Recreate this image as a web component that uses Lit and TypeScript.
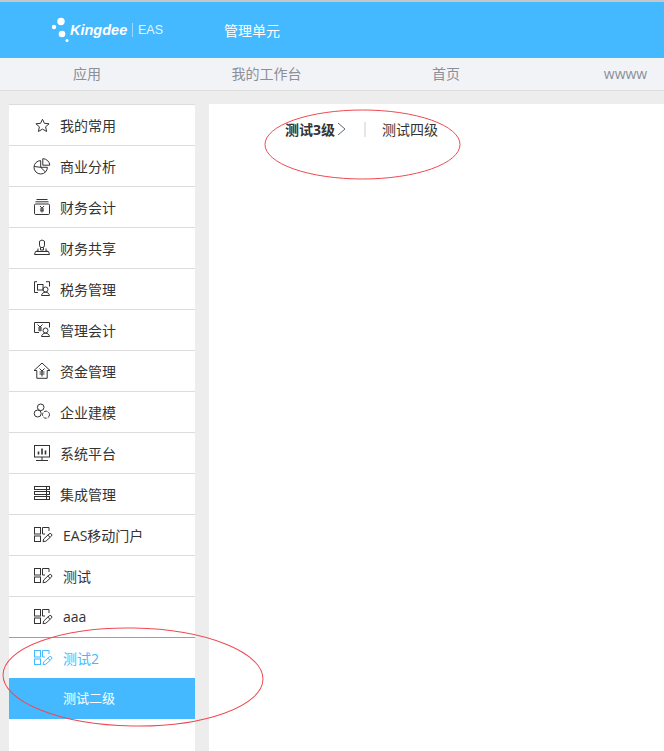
import { LitElement, html, css, svg } from "lit";
import { customElement } from "lit/decorators.js";

const frag = svg`<rect x="1.500" y="1.500" width="6" height="6.500"/><rect x="1.500" y="10" width="6" height="5.500"/><path d="M12 8H9.500V1.500H16V5"/><path d="M10 15.700l.7-2.700 5.300-5a1.300 1.300 0 0 1 2.400 2.200l-5.500 5z"/><path d="M14.800 9.100l2.200 2.100"/>`;

const icons: Record<string, unknown> = {
  star: svg`<path d="M9.500 3.300l1.900 4 4.700.5-3.500 3 1 4.700-4.100-2.400-4.100 2.400 1-4.700-3.500-3 4.700-.5z"/>`,
  pie: svg`<path d="M7.700 3.600a6.700 6.700 0 1 0 6.700 6.700H7.700z"/><path d="M9.800 1.700a7 7 0 0 1 7 6.500H9.800z"/><path d="M7.700 10.300L1.200 9.500M7.700 10.300l4.800 4.700"/>`,
  money: svg`<path d="M3.500 1.500h11M2.500 3.800h13"/><rect x="1.500" y="6" width="15" height="10.500" rx="1.200"/><path d="M7 8l2 2.200L11 8M9 10.200v4.300M7 11h4M7 12.800h4"/>`,
  share: svg`<path d="M6.500 2.200L9 1l2.500 1.200v4a2.500 2.500 0 0 1-5 0z"/><path d="M7.500 8.500V11h3V8.500"/><path d="M5 9.500V12H3.500M13 9.500V12h1.500"/><path d="M1.500 15.500h15M2.500 12.500h13"/><path d="M2.500 12.500l-1 3M15.500 12.500l1 3"/>`,
  tax: svg`<path d="M4 1.700H1.500V12.500H5M13 1.700h3.500V6.500"/><rect x="4.500" y="4.500" width="5.500" height="5.500"/><circle cx="12.500" cy="9.500" r="2.500"/><path d="M8.500 15.500c.3-2 1.700-3.300 4-3.300s3.700 1.300 4 3.300z"/>`,
  mgmt: svg`<path d="M6 11.500H1.500V1.500h15V6.500"/><path d="M4.500 3.500L7 6l2.500-2.500M7 6v4.500M5 7h4M5 9h4"/><circle cx="12.500" cy="9.500" r="2.500"/><path d="M8.500 15.500c.3-2 1.700-3.300 4-3.300s3.700 1.300 4 3.300z"/>`,
  fund: svg`<path d="M9 1L1 8.500h2.800v7.800h10.400V8.500H17z"/><path d="M6.500 6.500L9 9l2.500-2.500M9 9v5.500M6.500 10h5M6.500 12h5"/>`,
  model: svg`<circle cx="7.700" cy="4.300" r="3.300"/><circle cx="4.700" cy="10.500" r="3.500"/><circle cx="13" cy="11.700" r="3.500" stroke-dasharray="3.500 1.200"/>`,
  sys: svg`<rect x="1.500" y="1.500" width="15" height="11.500"/><path d="M5.500 10.500V7.500M9 10.500V4.500M12.500 10.500V6.500" stroke-width="1.600"/><path d="M9 13v3.500M3 16.500h12"/>`,
  int: svg`<rect x="1.500" y="1.500" width="15" height="3"/><rect x="1.500" y="6.500" width="15" height="3"/><rect x="1.500" y="11.500" width="15" height="3"/><path d="M13.500 1.500v13"/>`,
  frag,
};

const rows: [string, string, boolean][] = [
  ["star", "我的常用", false],
  ["pie", "商业分析", false],
  ["money", "财务会计", false],
  ["share", "财务共享", false],
  ["tax", "税务管理", false],
  ["mgmt", "管理会计", false],
  ["fund", "资金管理", false],
  ["model", "企业建模", false],
  ["sys", "系统平台", false],
  ["int", "集成管理", false],
  ["frag", "EAS移动门户", true],
  ["frag", "测试", true],
  ["frag", "aaa", true],
];

@customElement("app-root")
export class AppRoot extends LitElement {
  static styles = css`
    :host {
      display: block;
      position: relative;
      width: 664px;
      height: 751px;
      overflow: hidden;
      background: #ededed;
      font-family: "Open Sans", "Noto Sans CJK SC", sans-serif;
      font-size: 14px;
      color: #333;
    }
    .head {
      box-sizing: border-box;
      height: 58px;
      background: #45b9ff;
      border-top: 2px solid #c6c6c6;
      display: flex;
      align-items: center;
      padding-left: 51px;
      color: #fff;
    }
    .logo {
      display: flex;
      align-items: center;
      width: 173px;
    }
    .brand {
      font-family: "Liberation Sans", sans-serif;
      font-weight: 700;
      font-style: italic;
      font-size: 14.500px;
      width: 57px;
    }
    .sep {
      width: 1px;
      height: 14px;
      background: #9ad9ff;
      margin: 0 5px;
    }
    .eas {
      font-family: "Liberation Sans", sans-serif;
      font-size: 12.500px;
      color: #e2f4ff;
    }
    .nav {
      box-sizing: border-box;
      height: 33px;
      padding-bottom: 2px;
      background: #f1f3f7;
      border-bottom: 1px solid #dedede;
      display: flex;
      align-items: center;
      gap: 59.500px;
      padding-left: 27px;
      color: #8a8f99;
    }
    .nav span {
      flex: none;
      width: 120px;
      text-align: center;
    }
    .body {
      display: flex;
      gap: 14px;
      padding: 13px 0 0 9px;
    }
    .side {
      width: 186px;
      height: 647px;
      flex: none;
      background: #fff;
    }
    .row {
      box-sizing: border-box;
      height: 41px;
      border-top: 1px solid #dcdcdc;
      display: flex;
      align-items: center;
      padding-left: 24px;
      padding-bottom: 1px;
    }
    .row svg {
      width: 18px;
      height: 18px;
      flex: none;
      fill: none;
      stroke: currentColor;
      stroke-width: 1;
      overflow: visible;
    }
    .row span {
      margin-left: 9px;
    }
    .row.mod span {
      margin-left: 12px;
    }
    .row.active {
      border-top-color: #45b9ff;
      color: #45b9ff;
    }
    .sub {
      box-sizing: border-box;
      height: 41px;
      background: #45b9ff;
      color: #fff;
      font-size: 13px;
      display: flex;
      align-items: center;
      padding: 0 0 3px 54px;
    }
    .main {
      width: 455px;
      height: 647px;
      flex: none;
      background: #fff;
    }
    .tabs {
      display: flex;
      align-items: center;
      padding: 15px 0 0 76px;
    }
    .tabs b {
      font-weight: 700;
    }
    .tabs svg {
      width: 9px;
      height: 14px;
      margin-left: 2px;
      fill: none;
      stroke: #5a6b7d;
      stroke-width: 1;
    }
    .bar {
      width: 2px;
      height: 15px;
      background: #e6e6e6;
      margin: 0 16px 0 18px;
    }
    .marks {
      position: absolute;
      inset: 0;
      width: 664px;
      height: 751px;
      pointer-events: none;
      fill: none;
      stroke: #ee4a52;
      stroke-width: 1;
    }
    .dots {
      width: 19px;
      height: 26px;
      flex: none;
      fill: #fff;
    }
  `;

  render() {
    return html`
      <div class="head">
        <div class="logo">
          <svg class="dots" viewBox="0 0 19 26">
            <circle cx="10" cy="4.500" r="3.700" />
            <circle cx="3" cy="10" r="2.200" />
            <circle cx="11" cy="17" r="3.300" />
            <circle cx="16" cy="23.500" r="1.500" />
          </svg>
          <span class="brand">Kingdee</span>
          <span class="sep"></span>
          <span class="eas">EAS</span>
        </div>
        <span>管理单元</span>
      </div>
      <div class="nav">
        <span>应用</span><span>我的工作台</span><span>首页</span><span>wwww</span>
      </div>
      <div class="body">
        <div class="side">
          ${rows.map(
            ([ic, label, mod]) => html`
              <div class="row ${mod ? "mod" : ""}">
                <svg viewBox="0 0 18 18">${icons[ic]}</svg><span>${label}</span>
              </div>
            `
          )}
          <div class="row mod active">
            <svg viewBox="0 0 18 18">${frag}</svg><span>测试2</span>
          </div>
          <div class="sub">测试二级</div>
        </div>
        <div class="main">
          <div class="tabs">
            <b>测试3级</b>
            <svg viewBox="0 0 9 14"><path d="M1 1l7 6-7 6" /></svg>
            <span class="bar"></span>
            <span>测试四级</span>
          </div>
        </div>
      </div>
      <svg class="marks" viewBox="0 0 664 751">
        <ellipse cx="362.500" cy="144.500" rx="97.500" ry="34.500" />
        <ellipse cx="133" cy="677" rx="130" ry="49" transform="rotate(1 133 677)" />
      </svg>
    `;
  }
}
